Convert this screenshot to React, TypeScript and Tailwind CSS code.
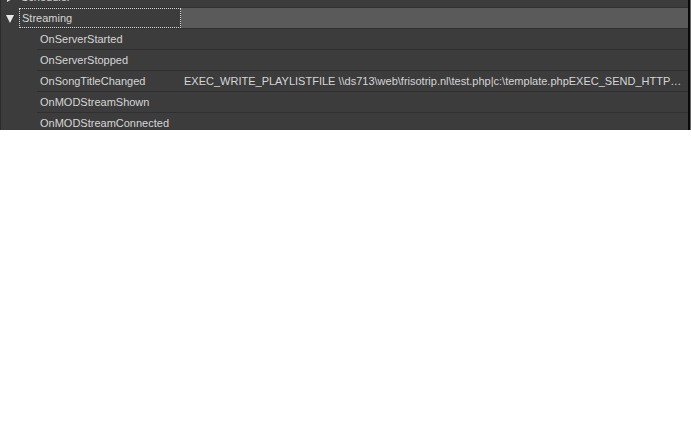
const rows = [
  { name: "OnServerStarted", value: "" },
  { name: "OnServerStopped", value: "" },
  {
    name: "OnSongTitleChanged",
    value:
      "EXEC_WRITE_PLAYLISTFILE \\\\ds713\\web\\frisotrip.nl\\test.php|c:\\template.phpEXEC_SEND_HTTP_GET http://www.frisotrip.nl/update.php?title=%s",
  },
  { name: "OnMODStreamShown", value: "" },
  { name: "OnMODStreamConnected", value: "" },
];

const App = () => {
  return (
    <div className="w-[691px] h-[421px] bg-white font-['Liberation_Sans',Arial,sans-serif] text-[11px] text-[#d6d6d6]">
      <div className="flex h-[130px]">
        <div className="w-[688px] h-full overflow-hidden bg-[#3c3c3c] border-l border-[#2c2c2c]">
          <div className="-mt-[13px]">
            {/* parent row above, cut off */}
            <div className="flex h-[21px]">
              <div className="w-[18px] shrink-0 flex items-center justify-center">
                <span className="w-0 h-0 border-y-[4px] border-y-transparent border-l-[7px] border-l-[#e0e0e0]" />
              </div>
              <div className="flex-1 flex items-center pl-[2px] border-b border-[#303030]">
                Scheduler
              </div>
            </div>

            {/* Streaming group, selected */}
            <div className="flex h-[21px]">
              <div className="w-[18px] shrink-0 flex items-center justify-center">
                <span className="w-0 h-0 border-x-[4px] border-x-transparent border-t-[8px] border-t-[#e8e8e8] mt-[1px]" />
              </div>
              <div className="flex-1 flex border-b border-[#303030]">
                <div className="w-[162px] shrink-0 flex items-center pl-[2px] border border-dotted border-[#d8d8d8]">
                  Streaming
                </div>
                <div className="flex-1 bg-[#5a5a5a]" />
              </div>
            </div>

            {rows.map((r) => (
              <div key={r.name} className="flex h-[21px]">
                <div className="w-[36px] shrink-0" />
                <div className="flex-1 min-w-0 flex items-center border-b border-[#303030]">
                  <div className="w-[144px] shrink-0 pl-[3px] truncate">{r.name}</div>
                  <div className="flex-1 min-w-0 pl-[3px] pr-[5px] truncate">{r.value}</div>
                </div>
              </div>
            ))}
          </div>
        </div>
        <div className="w-[2px] bg-[#0a0a0a]" />
        <div className="w-[1px] bg-[#6a6a6a]" />
      </div>
    </div>
  );
};

export default App;
